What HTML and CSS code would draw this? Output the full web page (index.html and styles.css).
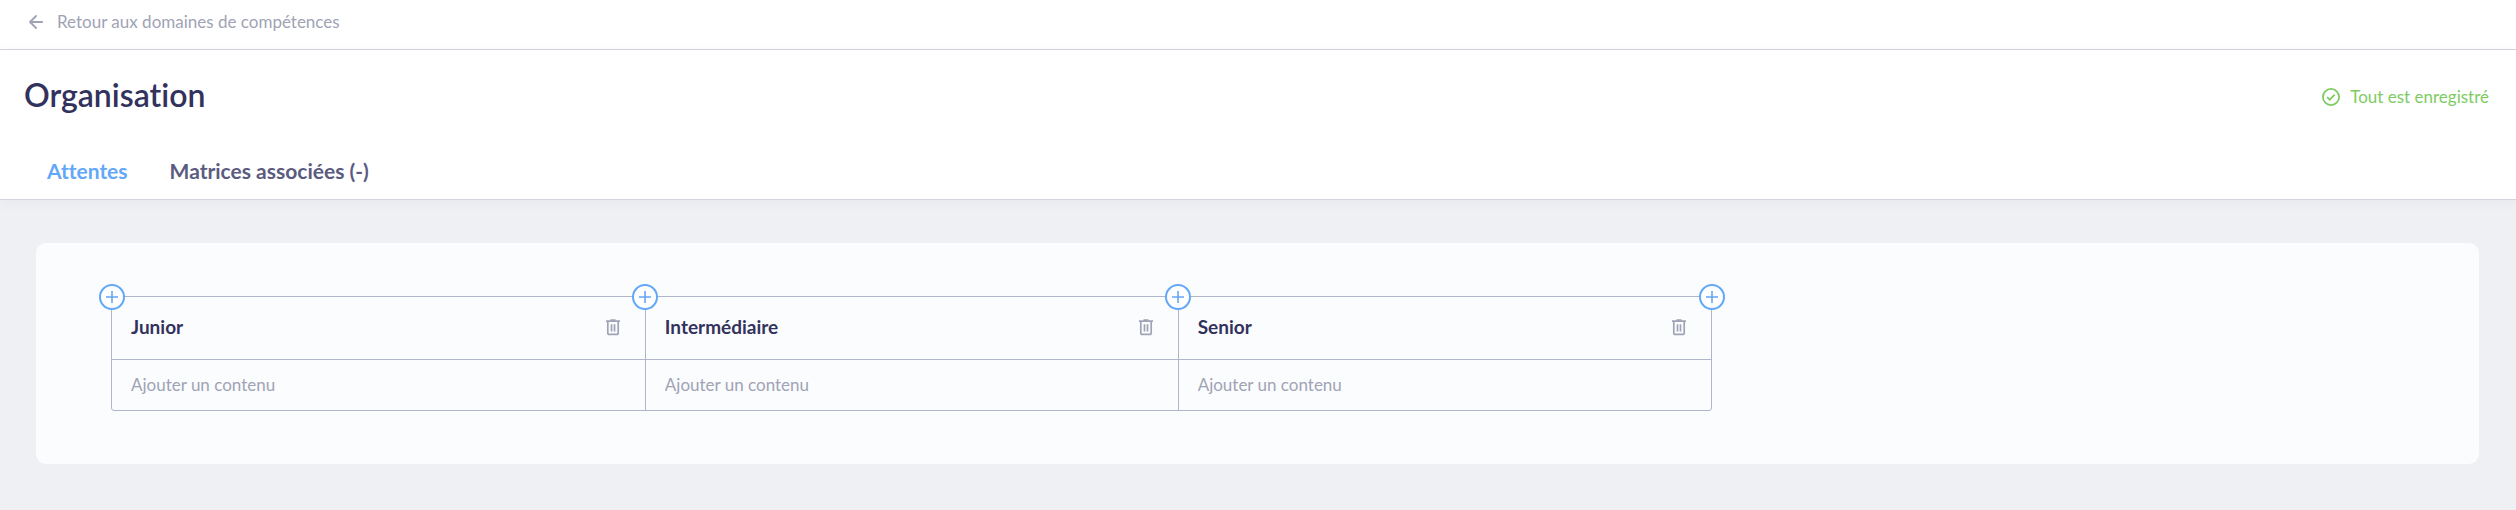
FILE: index.html
```html
<!DOCTYPE html>
<html lang="fr">
<head>
<meta charset="utf-8">
<meta name="viewport" content="width=device-width, initial-scale=1">
<title>Organisation</title>
<link rel="stylesheet" href="styles.css">
</head>
<body>
<svg class="sprite" aria-hidden="true">
  <symbol id="trash" viewBox="0 0 14 17">
    <path d="M1.800 2.500v11.700a1.200 1.200 0 0 0 1.200 1.200h8a1.200 1.200 0 0 0 1.200-1.200v-11.700M0 2.200h14M4.500 1h5M5.500 5.300v7.200M8.500 5.300v7.200" fill="none" stroke="currentColor" stroke-width="1.700"/>
  </symbol>
  <symbol id="plus" viewBox="0 0 12 12">
    <path d="M6 0v12M0 6h12" fill="none" stroke="currentColor" stroke-width="1.600"/>
  </symbol>
</svg>

<nav class="topbar">
  <a class="back" href="#">
    <svg class="back-icon" viewBox="0 0 14 14" aria-hidden="true"><path d="M13.200 7H1.200M7 1L1 7l6 6" fill="none" stroke="currentColor" stroke-width="1.800" stroke-linecap="round" stroke-linejoin="round"/></svg>
    <span>Retour aux domaines de compétences</span>
  </a>
</nav>

<header class="header">
  <div class="heading">
    <h1 class="title">Organisation</h1>
    <p class="status">
      <svg class="status-icon" viewBox="0 0 18 18" aria-hidden="true"><circle cx="9" cy="9" r="8.100" fill="none" stroke="currentColor" stroke-width="1.800"/><path d="M5.100 9.200l2.600 2.500 5-5" fill="none" stroke="currentColor" stroke-width="1.800"/></svg>
      <span>Tout est enregistré</span>
    </p>
  </div>
  <nav class="tabs">
    <a class="tab tab-active" href="#attentes" aria-current="page">Attentes</a>
    <a class="tab" href="#matrices">Matrices associées (-)</a>
  </nav>
</header>

<main class="content">
  <section class="card">
    <table class="levels">
      <thead>
        <tr>
          <th class="level" scope="col">
            <button class="add" type="button" aria-label="Ajouter un niveau avant Junior"><svg class="add-icon"><use href="#plus"/></svg></button>
            <div class="level-head"><span>Junior</span><button class="delete" type="button" aria-label="Supprimer Junior"><svg class="delete-icon"><use href="#trash"/></svg></button></div>
          </th>
          <th class="level" scope="col">
            <button class="add" type="button" aria-label="Ajouter un niveau avant Intermédiaire"><svg class="add-icon"><use href="#plus"/></svg></button>
            <div class="level-head"><span>Intermédiaire</span><button class="delete" type="button" aria-label="Supprimer Intermédiaire"><svg class="delete-icon"><use href="#trash"/></svg></button></div>
          </th>
          <th class="level" scope="col">
            <button class="add" type="button" aria-label="Ajouter un niveau avant Senior"><svg class="add-icon"><use href="#plus"/></svg></button>
            <div class="level-head"><span>Senior</span><button class="delete" type="button" aria-label="Supprimer Senior"><svg class="delete-icon"><use href="#trash"/></svg></button></div>
            <button class="add add-last" type="button" aria-label="Ajouter un niveau après Senior"><svg class="add-icon"><use href="#plus"/></svg></button>
          </th>
        </tr>
      </thead>
      <tbody>
        <tr>
          <td class="cell"><input class="entry" type="text" placeholder="Ajouter un contenu" aria-label="Contenu Junior"></td>
          <td class="cell"><input class="entry" type="text" placeholder="Ajouter un contenu" aria-label="Contenu Intermédiaire"></td>
          <td class="cell"><input class="entry" type="text" placeholder="Ajouter un contenu" aria-label="Contenu Senior"></td>
        </tr>
      </tbody>
    </table>
  </section>
</main>
</body>
</html>
```

FILE: styles.css
```css
* { box-sizing: border-box; }

body {
  margin: 0;
  min-height: 100vh;
  background: #eff0f4;
  color: #32325d;
  font-family: Lato, "Open Sans", sans-serif;
  font-size: 17px;
  font-variant-ligatures: none;
  line-height: 24px;
}

svg { display: block; }
.sprite { display: none; }

a { color: inherit; text-decoration: none; }

button {
  padding: 0;
  border: 0;
  background: none;
  color: inherit;
  font: inherit;
  cursor: pointer;
}

.topbar {
  display: flex;
  padding: 10px 24px 15px;
  border-bottom: 1px solid #d3d5de;
  background: #fff;
  color: #a0a3b5;
}

.back {
  display: flex;
  align-items: center;
  gap: 14px;
}

.back-icon { width: 14px; height: 14px; margin-left: 5px; }

.header {
  padding: 23px 24px 0;
  border-bottom: 1px solid #d3d5de;
  background: #fff;
  box-shadow: 0 2px 12px rgba(50, 50, 93, 0.05);
}

.heading {
  display: flex;
  align-items: center;
  justify-content: space-between;
}

.title {
  margin: 0;
  font-size: 32px;
  font-weight: 600;
  line-height: 44px;
}

.status {
  display: flex;
  align-items: center;
  gap: 10px;
  margin: 4px 3px 0 0;
  color: #7dcc63;
}

.status-icon { width: 18px; height: 18px; }

.tabs {
  display: flex;
  gap: 42px;
  padding: 42px 23px 16px;
  color: #5b5b7f;
  font-size: 21px;
  font-weight: 700;
}

.tab-active { color: #63a7f8; }

.content { padding: 43px 37px 43px 36px; }

.card {
  padding: 53px 75px;
  border-radius: 10px;
  background: #fbfcfe;
}

.levels {
  width: 69.8%;
  border: 1px solid #b0b5ca;
  border-radius: 3px;
  border-spacing: 0;
  table-layout: fixed;
}

.level {
  position: relative;
  padding: 0 25px 0 19px;
  border-bottom: 1px solid #b0b5ca;
  text-align: left;
}

.level + .level,
.cell + .cell { border-left: 1px solid #b0b5ca; }

.level-head {
  display: flex;
  align-items: center;
  justify-content: space-between;
  height: 62px;
  padding-bottom: 2px;
  font-size: 19px;
  font-weight: 700;
}

.delete { color: #a0a3b5; }
.delete-icon { width: 14px; height: 17px; }

.add {
  position: absolute;
  top: -13px;
  left: -13px;
  display: grid;
  place-items: center;
  width: 26px;
  height: 26px;
  border: 2px solid #63a7f8;
  border-radius: 50%;
  background: #fff;
  color: #63a7f8;
}

.level + .level .add { left: -14px; }
.level + .level .add-last { right: -14px; left: auto; }

.add-icon { width: 12px; height: 12px; }

.cell { padding: 0; }

.entry {
  display: block;
  width: 100%;
  height: 50px;
  padding: 0 19px 2px;
  border: 0;
  background: none;
  color: #32325d;
  font: inherit;
}

.entry::placeholder { color: #a0a3b5; opacity: 1; }
```
